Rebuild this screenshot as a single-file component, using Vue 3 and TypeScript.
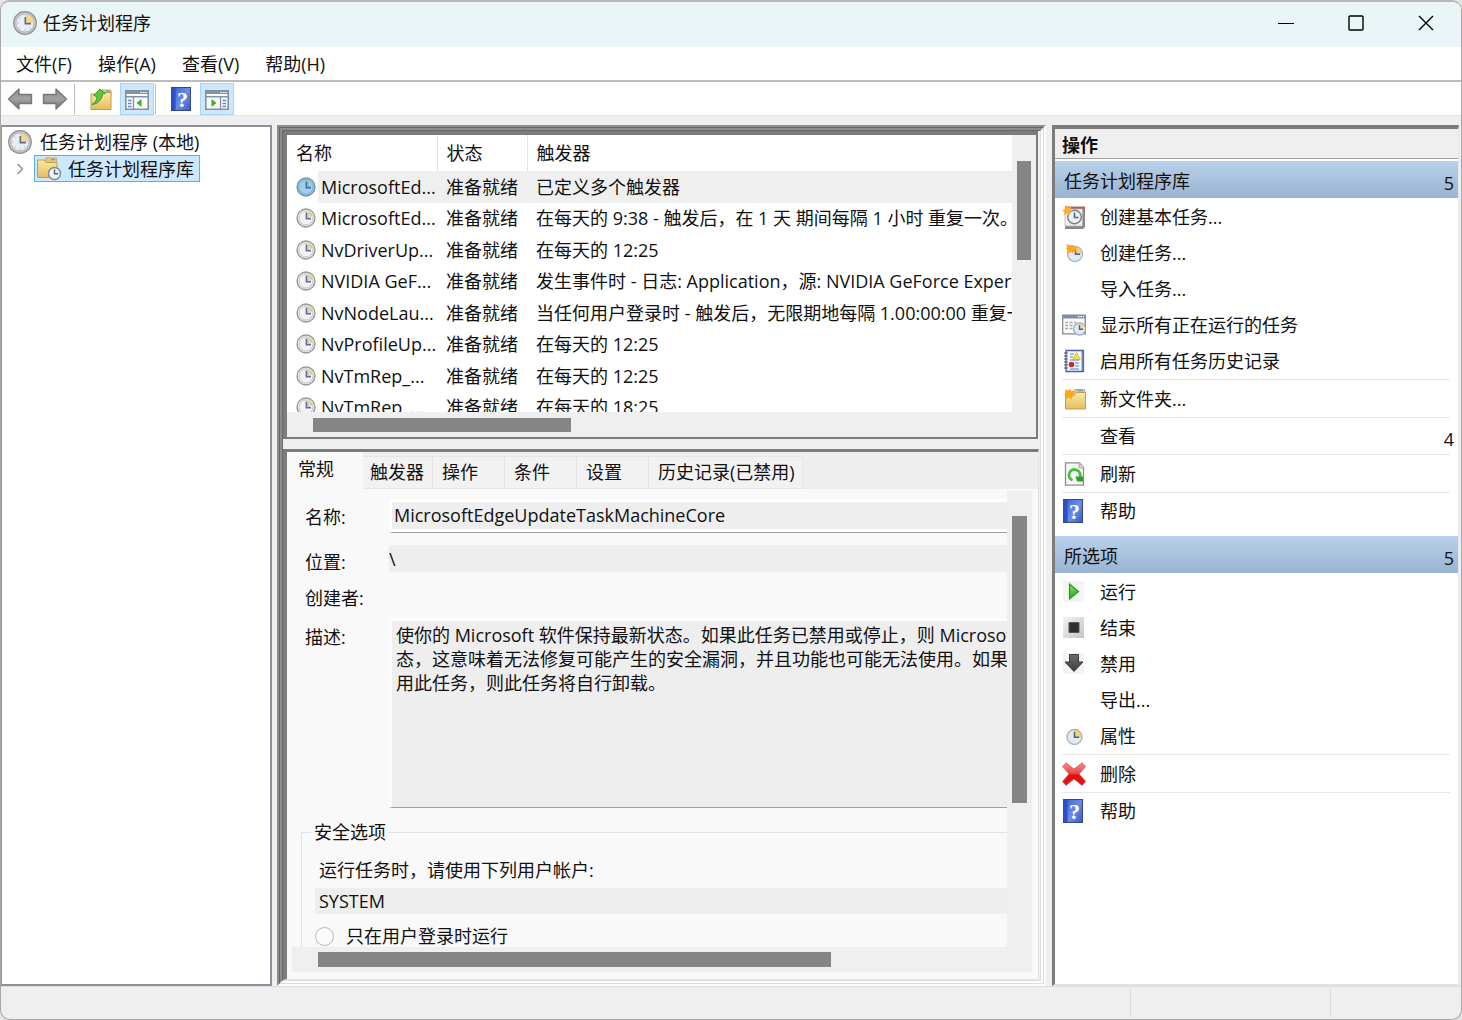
<script setup lang="ts">
import { ref } from 'vue'

interface Task { name: string; status: string; trigger: string }
interface Action { label: string; icon?: string; rule?: 'thin' | 'wide'; count?: string }
interface Group { title: string; count: string; items: Action[] }

const menus = ['文件(F)', '操作(A)', '查看(V)', '帮助(H)']

const tasks: Task[] = [
  { name: 'MicrosoftEd...', status: '准备就绪', trigger: '已定义多个触发器' },
  { name: 'MicrosoftEd...', status: '准备就绪', trigger: '在每天的 9:38 - 触发后，在 1 天 期间每隔 1 小时 重复一次。' },
  { name: 'NvDriverUp...', status: '准备就绪', trigger: '在每天的 12:25' },
  { name: 'NVIDIA GeF...', status: '准备就绪', trigger: '发生事件时 - 日志: Application，源: NVIDIA GeForce Experience' },
  { name: 'NvNodeLau...', status: '准备就绪', trigger: '当任何用户登录时 - 触发后，无限期地每隔 1.00:00:00 重复一次。' },
  { name: 'NvProfileUp...', status: '准备就绪', trigger: '在每天的 12:25' },
  { name: 'NvTmRep_...', status: '准备就绪', trigger: '在每天的 12:25' },
  { name: 'NvTmRep_...', status: '准备就绪', trigger: '在每天的 18:25' },
]
const selected = ref(0)

const tabs = ['常规', '触发器', '操作', '条件', '设置', '历史记录(已禁用)']
const activeTab = ref(0)

const taskName = ref('MicrosoftEdgeUpdateTaskMachineCore')
const location = ref('\\')
const description = ref(
  '使你的 Microsoft 软件保持最新状态。如果此任务已禁用或停止，则 Microsoft\n' +
  '态，这意味着无法修复可能产生的安全漏洞，并且功能也可能无法使用。如果\n' +
  '用此任务，则此任务将自行卸载。'
)
const account = ref('SYSTEM')

const groups: Group[] = [
  {
    title: '任务计划程序库',
    count: '5',
    items: [
      { label: '创建基本任务...', icon: 'i-basic' },
      { label: '创建任务...', icon: 'i-new' },
      { label: '导入任务...' },
      { label: '显示所有正在运行的任务', icon: 'i-running' },
      { label: '启用所有任务历史记录', icon: 'i-history' },
      { label: '新文件夹...', icon: 'i-newfolder', rule: 'wide' },
      { label: '查看', rule: 'thin', count: '4' },
      { label: '刷新', icon: 'i-refresh', rule: 'wide' },
      { label: '帮助', icon: 'i-help', rule: 'thin' },
    ],
  },
  {
    title: '所选项',
    count: '5',
    items: [
      { label: '运行', icon: 'i-run' },
      { label: '结束', icon: 'i-stop' },
      { label: '禁用', icon: 'i-disable' },
      { label: '导出...' },
      { label: '属性', icon: 'i-props' },
      { label: '删除', icon: 'i-delete', rule: 'wide' },
      { label: '帮助', icon: 'i-help', rule: 'thin' },
    ],
  },
]
</script>

<template>
  <div class="window">
    <svg class="defs" aria-hidden="true">
      <defs>
        <linearGradient id="g-folder" x1="0" y1="0" x2="0" y2="1">
          <stop offset="0" stop-color="#fbe9a6" /><stop offset="1" stop-color="#e6bd5c" />
        </linearGradient>
        <linearGradient id="g-arrow" x1="0" y1="0" x2="0" y2="1">
          <stop offset="0" stop-color="#8a8a8a" /><stop offset="0.5" stop-color="#a2a2a2" /><stop offset="1" stop-color="#6f6f6f" />
        </linearGradient>
        <linearGradient id="g-help" x1="0" y1="0" x2="1" y2="1">
          <stop offset="0" stop-color="#4568d8" /><stop offset="0.5" stop-color="#6b8de6" /><stop offset="1" stop-color="#3a5cc0" />
        </linearGradient>
        <linearGradient id="g-stop" x1="0" y1="0" x2="1" y2="1">
          <stop offset="0" stop-color="#f4f4f4" /><stop offset="1" stop-color="#c4c4c4" />
        </linearGradient>
        <linearGradient id="g-red" x1="0" y1="0" x2="0" y2="1">
          <stop offset="0" stop-color="#f28c8c" /><stop offset="0.45" stop-color="#ea4a4a" /><stop offset="0.55" stop-color="#ee0c0c" /><stop offset="1" stop-color="#d41a1a" />
        </linearGradient>
        <linearGradient id="g-green" x1="0" y1="0" x2="0" y2="1">
          <stop offset="0" stop-color="#7be05a" /><stop offset="1" stop-color="#2faa22" />
        </linearGradient>
        <linearGradient id="g-dark" x1="0" y1="0" x2="0" y2="1">
          <stop offset="0" stop-color="#6c6c6c" /><stop offset="1" stop-color="#3c3c3c" />
        </linearGradient>
      </defs>
      <symbol id="i-clock" viewBox="0 0 24 24">
        <circle cx="12" cy="12" r="11.3" fill="#c6c6c6" stroke="#8f8f8f" stroke-width="1.2" />
        <circle cx="12" cy="12" r="9" fill="#e6eff8" stroke="#a9adb1" stroke-width=".7" />
        <path d="M12 12V3.400A8.600 8.600 0 0 1 20.600 12Z" fill="#f6d488" />
        <path d="M12.300 6v6.600H18" fill="none" stroke="#5b6f8c" stroke-width="1.600" />
        <path d="M4.500 12h1.300M12 19.500v-1.300M6.600 6.600l.8.8M6.600 17.400l.8-.8M17.400 17.400l-.8-.8" stroke="#9db0c4" />
      </symbol>
      <symbol id="i-task" viewBox="0 0 20 20">
        <circle cx="10" cy="10" r="9" fill="#e6e6e6" stroke="#969896" stroke-width="1.300" />
        <circle cx="10" cy="10" r="7" fill="#f1f4f6" stroke="#b9bcbc" stroke-width=".8" />
        <path d="M11 9V3.500A6 6 0 0 1 16.400 9Z" fill="#e9e98c" />
        <path d="M13.600 4.600l2.400 3.400" stroke="#f0a080" />
        <path d="M10.400 4.600v6H15" fill="none" stroke="#6e63b4" stroke-width="1.600" />
        <path d="M12 5v4" stroke="#8fe08a" stroke-width="1.200" />
      </symbol>
      <symbol id="i-task-on" viewBox="0 0 20 20">
        <circle cx="10" cy="10" r="9" fill="#93bfdf" stroke="#6f97b4" stroke-width="1.300" />
        <circle cx="10" cy="10" r="7" fill="#a4cdea" stroke="#7fa9c9" stroke-width=".8" />
        <path d="M11 9V3.500A6 6 0 0 1 16.400 9Z" fill="#9fcfb4" />
        <path d="M10.400 4.600v6H15" fill="none" stroke="#3b6aa8" stroke-width="1.600" />
        <path d="M12 5v4" stroke="#69c79a" stroke-width="1.200" />
      </symbol>
      <symbol id="i-props" viewBox="0 0 24 24">
        <circle cx="12.500" cy="13" r="7.500" fill="#dfeaf2" stroke="#a9b7c2" stroke-width="1.400" />
        <path d="M12.500 13V6A7 7 0 0 1 19.500 13Z" fill="#f4cf7c" stroke="#e0b868" stroke-width=".8" />
        <path d="M12.500 8v5.300h4.600" fill="none" stroke="#4d6480" stroke-width="1.500" />
      </symbol>
      <symbol id="i-new" viewBox="0 0 24 24">
        <circle cx="13" cy="13" r="7.500" fill="#dfeaf2" stroke="#a9b7c2" stroke-width="1.400" />
        <path d="M13 13V6a7 7 0 0 1 7 7Z" fill="#f4cf7c" />
        <path d="M13.500 8v5.300h4.600" fill="none" stroke="#4d6480" stroke-width="1.500" />
        <path d="M4 3l4 1.200 3.200-.2 1.300 1.800 2.500.6-1.500 2.600.5 2-2.500 0-.5 1.500L8.800 11 5 13.500l1-4L4 7.500l1.200-1.500Z" fill="#fba61c" />
      </symbol>
      <symbol id="i-basic" viewBox="0 0 24 24">
        <path d="M3 2h20v20l-2 2H3Z" fill="#8d8585" />
        <path d="M3 1.500h20v3H3Z" fill="#a9665c" />
        <path d="M3 4h17.500v17H3Z" fill="#f2f0ee" stroke="#b4b0ae" stroke-width=".8" />
        <circle cx="12.500" cy="12" r="6.800" fill="#eaf1f2" stroke="#7b848a" stroke-width="1.500" />
        <path d="M12.500 7.500v5h4" fill="none" stroke="#4d6480" stroke-width="1.500" />
        <path d="M4.500 0l1.500 2.500L9 1.500 8.500 4.500 11 6 8 7 7.500 10.500 5 8.500 1.500 10 2.500 7 0 5.500 3 4.500Z" fill="#fdb02e" />
      </symbol>
      <symbol id="i-running" viewBox="0 0 24 24">
        <path d="M.7 2.200h22.600v18.600H.7Z" fill="#fafafa" stroke="#858b94" stroke-width="1.300" />
        <path d="M1 2h22v3.500H1Z" fill="#7e8ea6" />
        <path d="M16 3.700h1.500M18.500 3.700H20M21 3.700h1" stroke="#fff" stroke-width="1.200" />
        <path d="M3 9.500h3M7.500 9.500h3M3 12.500h3M7.500 12.500h3M3 15.500h3M7.500 15.500h3M12 9.500h2" stroke="#a9a9a9" stroke-width="1.400" />
        <circle cx="17.500" cy="16" r="6" fill="#dcebf2" stroke="#9fb0ba" stroke-width="1.300" />
        <path d="M17.500 16v-5.400a5.400 5.400 0 0 1 5.400 5.400Z" fill="#f4d9a0" />
        <path d="M17.500 12v4.300h3.500" fill="none" stroke="#4d6480" stroke-width="1.400" />
      </symbol>
      <symbol id="i-history" viewBox="0 0 24 24">
        <path d="M4 1.500h17.500v21H4Z" fill="#fbfcff" stroke="#4a5f9c" stroke-width="1.300" />
        <path d="M19.500 2h2v20h-2Z" fill="#7183bf" />
        <path d="M2 4h4M2 7h4M2 10h4M2 13h4M2 16h4M2 19h4" stroke="#555" stroke-width="1.100" />
        <path d="M8 5h4M8 8h3M8 11h9M13 14h4M13 17h4M8 20h9" stroke="#84a7d8" stroke-width="1.300" />
        <path d="M14.500 3.500l3.800 7h-7.600Z" fill="#f6dc3c" stroke="#c7a81c" stroke-width=".6" />
        <circle cx="9.500" cy="15.500" r="2.800" fill="#cf2626" />
      </symbol>
      <symbol id="i-newfolder" viewBox="0 0 24 24">
        <path d="M12 4.500l1-2h9.500v6H12Z" fill="#e9c878" stroke="#c29d4b" stroke-width=".8" />
        <path d="M15.500 3.500h5" stroke="#5fa8e8" stroke-width="1.600" />
        <path d="M3.500 7.500h9l2-2h9v16.500h-20Z" fill="url(#g-folder)" stroke="#c29d4b" stroke-width="1" />
        <path d="M3 2l2.500 1.500L8 2l1 2 4-.5-1.500 3 1.500 2.500-3 .5-.5 3L7 10.500 3.500 12l.5-3-1.500-2 1-1.500Z" fill="#fba61c" />
      </symbol>
      <symbol id="i-refresh" viewBox="0 0 24 24">
        <path d="M3.500.8h14l4 5v17.400h-18Z" fill="#f8f8f8" stroke="#8e8e8e" stroke-width="1.300" />
        <path d="M17 1v5h4.500" fill="#ddd" stroke="#aaa" />
        <path d="M10.500 18.300A5.600 5.600 0 1 1 18.200 13v2" fill="none" stroke="#46bd3c" stroke-width="2.800" />
        <path d="M13.500 14.500H21V19.500h-6Z" fill="#2f9e2c" />
      </symbol>
      <symbol id="i-help" viewBox="0 0 24 24">
        <path d="M1 0h20v24h-20Z" fill="#36468c" />
        <path d="M1.500 1h4v22h-4Z" fill="#2c50c8" />
        <path d="M5.500 1H20v22H5.500Z" fill="url(#g-help)" />
        <text x="12.500" y="20" text-anchor="middle" class="help-mark">?</text>
      </symbol>
      <symbol id="i-run" viewBox="0 0 24 24">
        <path d="M1 1h21v21H1Z" fill="#f4f4f4" />
        <path d="M7.500 4l9 7.500-9 7.500Z" fill="url(#g-green)" stroke="#239c1a" stroke-width="1.200" />
      </symbol>
      <symbol id="i-stop" viewBox="0 0 24 24">
        <path d="M1 1h21v21H1Z" fill="url(#g-stop)" />
        <path d="M7 6.500h10v10H7Z" fill="#2f2f2f" stroke="#555" />
      </symbol>
      <symbol id="i-disable" viewBox="0 0 24 24">
        <path d="M1 1h21v21H1Z" fill="#f4f4f4" />
        <path d="M7.500 2.500h9V10H21L12 19.500 3 10H7.500Z" fill="url(#g-dark)" stroke="#3a3a3a" stroke-width="1" />
      </symbol>
      <symbol id="i-delete" viewBox="0 0 24 24">
        <path d="M4 .8L12 7 20 .8 23.800 4.500 17 12 23.800 19.500 20 23.500 12 17 4 23.500.5 19.500 7 12 .5 4.500Z" fill="url(#g-red)" stroke="#c75a5a" stroke-width=".7" stroke-linejoin="round" />
      </symbol>
      <symbol id="i-back" viewBox="0 0 26 24">
        <path d="M1.500 12L12 2v5.500h12.500v9H12V22Z" fill="url(#g-arrow)" stroke="#777" stroke-width="1.400" stroke-linejoin="round" />
      </symbol>
      <symbol id="i-up" viewBox="0 0 24 24">
        <path d="M12 5l1-2h9v6H12Z" fill="#e9c878" stroke="#c29d4b" stroke-width=".8" />
        <path d="M17 4h3.500" stroke="#5fa8e8" stroke-width="1.500" />
        <path d="M2 7h10l2-1.500h8V22.500H2Z" fill="url(#g-folder)" stroke="#c29d4b" />
        <path d="M3 17.500C6.500 15.500 8 13 8 9.500L4.500 8.500 11 2l5.500 4.500L13.500 7C13 13 8.500 17 3 17.500Z" fill="#57c93a" stroke="#349a22" stroke-width=".9" />
      </symbol>
      <symbol id="i-pane-left" viewBox="0 0 24 22">
        <path d="M.8 1.800h22.400v18.400H.8Z" fill="#fafafa" stroke="#8a8f97" stroke-width="1.600" />
        <path d="M1 2h22v3H1ZM1 7h22v1.600H1Z" fill="#8494a8" />
        <path d="M15.500 3.500h1.500M18 3.500h1.500M20.500 3.500H22" stroke="#fff" />
        <path d="M8.500 8v12" stroke="#8a8f97" stroke-width="1.300" />
        <path d="M3 11.500h3.500M3 14.500h3.500M3 17.500h3.500" stroke="#5b8ed0" stroke-width="1.400" />
        <path d="M16.500 10v8L11.500 14Z" fill="#3dae2b" />
      </symbol>
      <symbol id="i-pane-right" viewBox="0 0 24 22">
        <path d="M.8 1.800h22.400v18.400H.8Z" fill="#fafafa" stroke="#8a8f97" stroke-width="1.600" />
        <path d="M1 2h22v3H1ZM1 7h22v1.600H1Z" fill="#8494a8" />
        <path d="M15.500 3.500h1.500M18 3.500h1.500M20.500 3.500H22" stroke="#fff" />
        <path d="M15.500 8v12" stroke="#8a8f97" stroke-width="1.300" />
        <path d="M17.500 11.500H21M17.500 14.500H21M17.500 17.500H21" stroke="#5b8ed0" stroke-width="1.400" />
        <path d="M6.500 10v8l5-4Z" fill="#3dae2b" />
      </symbol>
      <symbol id="i-library" viewBox="0 0 26 24">
        <path d="M9 3l1-2h10.500v6H9Z" fill="#e9c878" stroke="#c29d4b" stroke-width=".8" />
        <path d="M15 2.500h4" stroke="#5fa8e8" stroke-width="1.600" />
        <path d="M1.500 3H8l2 2.500h11V20.500H1.500Z" fill="url(#g-folder)" stroke="#c29d4b" />
        <circle cx="18.500" cy="16.500" r="6" fill="#edf3f7" stroke="#7f8a94" stroke-width="1.500" />
        <path d="M18.500 12.500v4.300h3.600" fill="none" stroke="#4d6480" stroke-width="1.400" />
      </symbol>
    </svg>

    <header class="titlebar">
      <svg class="ico24"><use href="#i-clock" /></svg>
      <h1>任务计划程序</h1>
      <div class="controls">
        <button type="button" aria-label="最小化"><svg viewBox="0 0 16 16"><path d="M0 8.500h16" /></svg></button>
        <button type="button" aria-label="最大化"><svg viewBox="0 0 16 16"><rect x="1" y="1" width="14" height="14" rx="1" class="bold" /></svg></button>
        <button type="button" aria-label="关闭"><svg viewBox="0 0 16 16"><path d="M1 1l14 14M15 1L1 15" class="bold" /></svg></button>
      </div>
    </header>

    <nav class="menubar">
      <button v-for="m in menus" :key="m" type="button">{{ m }}</button>
    </nav>

    <div class="toolbar">
      <button type="button" class="arrow" aria-label="后退"><svg><use href="#i-back" /></svg></button>
      <button type="button" class="arrow forward" aria-label="前进"><svg><use href="#i-back" /></svg></button>
      <span class="bar"></span>
      <button type="button" class="tool up" aria-label="上一级"><svg class="ico24"><use href="#i-up" /></svg></button>
      <button type="button" class="tool on" aria-label="控制台树"><svg class="pane-ico"><use href="#i-pane-left" /></svg></button>
      <span class="bar"></span>
      <button type="button" class="tool" aria-label="帮助"><svg class="ico24"><use href="#i-help" /></svg></button>
      <button type="button" class="tool on" aria-label="操作窗格"><svg class="pane-ico"><use href="#i-pane-right" /></svg></button>
    </div>

    <main class="body">
      <aside class="tree">
        <div class="root"><svg class="ico24"><use href="#i-clock" /></svg><span>任务计划程序 (本地)</span></div>
        <div class="branch">
          <svg class="chevron" viewBox="0 0 8 12"><path d="M1.500 1l5 5-5 5" /></svg>
          <button type="button" class="node"><svg><use href="#i-library" /></svg><span>任务计划程序库</span></button>
        </div>
      </aside>

      <div class="edge a"><div class="edge b"><div class="edge a"><div class="edge b">
        <div class="center">
          <section class="listbox">
            <div class="listview">
              <table>
                <thead>
                  <tr><th class="c-name">名称</th><th class="c-status">状态</th><th class="c-trigger">触发器</th></tr>
                </thead>
                <tbody>
                  <tr v-for="(t, i) in tasks" :key="i" :class="{ sel: i === selected }" @click="selected = i">
                    <td class="c-name"><span class="cell"><svg><use :href="i === selected ? '#i-task-on' : '#i-task'" /></svg><span>{{ t.name }}</span></span></td>
                    <td>{{ t.status }}</td>
                    <td>{{ t.trigger }}</td>
                  </tr>
                </tbody>
              </table>
            </div>
            <div class="vscroll"><div class="thumb"></div></div>
            <div class="hscroll"><div class="thumb"></div></div>
          </section>

          <section class="details">
            <div class="tabs" role="tablist">
              <button v-for="(t, i) in tabs" :key="t" type="button" role="tab" :aria-selected="i === activeTab" :class="{ active: i === activeTab }" @click="activeTab = i">{{ t }}</button>
            </div>
            <div class="page">
              <div class="viewport">
                <form class="form" @submit.prevent>
                  <div class="field name"><label for="f-name">名称:</label><input id="f-name" v-model="taskName" type="text" readonly /></div>
                  <div class="field place"><label for="f-place">位置:</label><input id="f-place" v-model="location" type="text" readonly /></div>
                  <div class="field author"><span>创建者:</span></div>
                  <div class="field desc"><label for="f-desc">描述:</label><textarea id="f-desc" v-model="description" wrap="off" readonly></textarea></div>
                  <fieldset>
                    <legend>安全选项</legend>
                    <label class="hint" for="f-account">运行任务时，请使用下列用户帐户:</label>
                    <input id="f-account" v-model="account" type="text" readonly />
                    <label class="choice"><input type="radio" name="logon" disabled /><span>只在用户登录时运行</span></label>
                  </fieldset>
                </form>
              </div>
              <div class="vscroll"><div class="thumb"></div></div>
              <div class="hscroll"><div class="thumb"></div></div>
            </div>
          </section>
        </div>
      </div></div></div></div>

      <aside class="actions">
        <h2>操作</h2>
        <section v-for="g in groups" :key="g.title">
          <h3><span>{{ g.title }}</span><span class="count">{{ g.count }}</span></h3>
          <ul>
            <li v-for="a in g.items" :key="a.label" :class="a.rule">
              <button type="button">
                <span class="slot"><svg v-if="a.icon" class="ico24"><use :href="'#' + a.icon" /></svg></span>
                <span>{{ a.label }}</span>
                <span v-if="a.count" class="count">{{ a.count }}</span>
              </button>
            </li>
          </ul>
        </section>
      </aside>
    </main>

    <footer class="status"><span></span><span></span><span></span></footer>
  </div>
</template>

<style>
html, body { background: #e4e4e4; }
</style>

<style scoped>
.window, .window * { box-sizing: border-box; }
.window {
  display: flex;
  flex-direction: column;
  height: 100vh;
  min-height: 600px;
  overflow: hidden;
  border: 1px solid #a8a8a8;
  border-top: 2px solid #b6b6b6;
  border-radius: 10px;
  background: #efefef;
  color: #111;
  font: 18px/24px "Open Sans", "Noto Sans CJK SC", sans-serif;
}
.defs { position: absolute; width: 0; height: 0; }
.help-mark { font: bold 22px "Liberation Serif", serif; fill: #fff; }
button {
  margin: 0;
  padding: 0;
  border: 0;
  background: none;
  color: inherit;
  font: inherit;
  text-align: left;
}
input, textarea { margin: 0; border: 0; border-radius: 0; outline: 0; color: inherit; font: inherit; }
svg { display: block; flex: none; }
.ico24 { width: 24px; height: 24px; }

.titlebar { display: flex; flex: none; align-items: center; height: 45px; padding: 0 0 3px 12px; background: #eaf5f7; }
.titlebar h1 { margin: 0 0 0 6px; font-size: 18px; font-weight: 400; }
.controls { display: flex; margin-left: auto; }
.controls button { display: flex; align-items: center; justify-content: center; width: 70px; height: 42px; }
.controls svg { width: 16px; height: 16px; fill: none; stroke: #000; stroke-width: 1; }
.controls .bold { stroke-width: 1.4; }

.menubar { display: flex; flex: none; gap: 26px; height: 35px; padding: 0 15px; border-bottom: 2px solid #bcbcbe; background: #fff; }

.toolbar { display: flex; flex: none; align-items: center; height: 34px; padding: 1px 0 0 6px; border-bottom: 1px solid #e2e2e2; background: #fff; }
.arrow { width: 26px; height: 24px; margin-right: 9px; }
.arrow svg { width: 26px; height: 24px; }
.forward { margin-right: 6px; transform: scaleX(-1); }
.bar { width: 1px; height: 30px; background: #bdbdbd; }
.tool { display: flex; align-items: center; justify-content: center; width: 34px; height: 32px; }
.tool.up { margin: 0 1px 0 9px; }
.tool.on { padding-top: 2px; border: 1px solid #a6d6fb; background: #cce8ff; }
.tool.on + .bar { margin: 0 9px 0 1px; }
.tool + .tool.on { margin-left: 1px; }
.pane-ico { width: 24px; height: 22px; }

.body { display: flex; flex: 1; min-height: 0; padding: 9px 2px 0 0; }
.tree { flex: none; width: 271px; margin-right: 5px; border: 2px solid #8b929c; border-left-width: 1px; background: #fff; }
.root { display: flex; align-items: center; gap: 8px; padding: 3px 0 0 6px; }
.branch { display: flex; align-items: center; height: 29px; padding-left: 14px; }
.chevron { width: 8px; height: 12px; margin-right: 10px; fill: none; stroke: #8a8a8a; stroke-width: 1.3; }
.node { display: flex; align-items: center; height: 27px; padding: 0 5px 0 1px; border: 1px solid #5aaeea; background: #cce8ff; }
.node svg { width: 26px; height: 24px; margin-right: 6px; }

.edge { display: flex; flex: 1; min-width: 0; border-style: solid; }
.edge.a { border-width: 2px; border-color: #8d8d8d #fdfdfd #fdfdfd #8d8d8d; }
.edge.b { border-width: 1px; border-color: #686868 #dedede #dedede #686868; }
.center { display: flex; flex: 1; flex-direction: column; min-width: 0; padding-right: 1px; }

.listbox {
  display: grid;
  grid-template: 1fr 25px / 1fr 24px;
  flex: none;
  height: 308px;
  margin-right: 1px;
  border-style: solid;
  border-width: 4px 2px 2px 4px;
  border-color: #7c7c7c;
  background: #efefef;
}
.listview { min-width: 0; min-height: 0; overflow: hidden; background: #fff; }
table { width: 100%; height: 288px; border-collapse: collapse; table-layout: fixed; }
th, td { padding: 0 0 0 9px; overflow: hidden; font-weight: 400; text-align: left; white-space: nowrap; }
th { height: 36px; border-right: 1px solid #e4e4e4; }
th:last-child { border-right: 0; }
th.c-name { width: 150px; }
th.c-status { width: 90px; }
.cell { display: flex; align-items: center; gap: 5px; }
.cell svg { width: 20px; height: 20px; }
.sel td { background: #efefef; }
.sel td.c-name { background: linear-gradient(90deg, #fff 31px, #efefef 31px); }

.vscroll, .hscroll { display: flex; background: #efefef; }
.thumb { background: #858585; }
.listbox .vscroll { padding: 26px 5px 0; }
.listbox .vscroll .thumb { width: 14px; height: 99px; }
.listbox .hscroll { padding: 6px 0 0 26px; }
.listbox .hscroll .thumb { width: 258px; height: 14px; }

.details {
  display: flex;
  flex: 1;
  flex-direction: column;
  min-height: 0;
  margin-top: 10px;
  border-style: solid;
  border-width: 3px 1px 1px 4px;
  border-color: #7c7c7c #e3e3e3 #e3e3e3 #7c7c7c;
  background: #eee;
}
.tabs { display: flex; flex: none; align-items: flex-end; height: 37px; }
.tabs button { min-width: 72px; height: 33px; padding: 0 7px 2px; border: 1px solid #e6e6e6; border-left: 0; background: #f2f2f2; white-space: nowrap; }
.tabs button:nth-child(2) { min-width: 70px; width: 70px; }
.tabs button:nth-child(n + 3) { padding-left: 9px; }
.tabs button.active { width: 76px; height: 37px; padding: 0 11px 4px; border: 0; background: #f9f9f9; }
.page {
  display: grid;
  grid-template: 1fr 25px / 1fr 25px;
  flex: 1;
  min-height: 0;
  padding: 0 6px 7px 0;
  background: #f9f9f9;
}
.page .vscroll { margin-top: 2px; padding: 25px 5px 0; }
.page .vscroll .thumb { width: 15px; height: 287px; }
.page .hscroll { grid-column: 1 / 3; margin-left: 5px; padding: 5px 0 0 26px; }
.page .hscroll .thumb { width: 513px; height: 15px; }
.viewport { min-width: 0; min-height: 0; overflow: hidden; }
.form { width: calc(100% + 60px); padding: 10px 0 0 14px; }
.field { display: grid; grid-template-columns: 84px 1fr; padding-left: 4px; }
.field input { width: 100%; background: #eee; }
.name label { padding-top: 6px; }
.name input { height: 34px; padding: 0 2px 4px; border: 3px solid #fff; border-bottom: 1px solid #a0a0a0; box-shadow: inset 0 -3px #fff; }
.place { margin-top: 12px; }
.place label { padding-top: 5px; }
.place input { height: 27px; padding: 0; }
.author { height: 42px; padding-top: 13px; margin-top: -1px; }
.desc { margin-top: 3px; }
.desc label { padding-top: 7px; }
.desc textarea {
  display: block;
  width: 100%;
  height: 190px;
  padding: 2px 4px;
  overflow: hidden;
  border: 3px solid #fcfcfc;
  border-bottom: 1px solid #a0a0a0;
  background: #eee;
  line-height: 24px;
  resize: none;
  white-space: pre;
}
fieldset { display: flex; flex-direction: column; min-width: 0; margin: 12px 0 0; padding: 14px 0 40px 13px; border: 1px solid #e2e2e2; }
legend { margin-left: -4px; padding: 0 3px; }
fieldset > input { height: 26px; margin: 6px 0 10px; padding: 0 4px; background: #eee; }
.hint { padding-left: 4px; }
.choice { display: flex; align-items: center; gap: 12px; }
.choice input { appearance: none; flex: none; width: 19px; height: 19px; border: 1px solid #b8b8b8; border-radius: 50%; background: #fafafa; }

.actions {
  flex: none;
  width: 407px;
  margin-left: 6px;
  overflow: hidden;
  border-style: solid;
  border-width: 4px 1px 2px 3px;
  border-color: #7c7c7c #e6e6e6 #e3e3e3 #7c7c7c;
  background: #fff;
}
.actions h2 { height: 30px; margin: 0 0 2px; padding: 4px 0 0 7px; border-bottom: 1px solid #a0a0a0; background: #efefef; font-size: 18px; line-height: 24px; }
.actions h3 {
  display: flex;
  align-items: center;
  justify-content: space-between;
  height: 37px;
  margin: 0 0 1px;
  padding: 2px 4px 0 9px;
  background: linear-gradient(#b9d1ea, #99b4d1);
  font-size: 18px;
  font-weight: 400;
}
.actions h3 .count { padding-top: 5px; }
.actions section + section { margin-top: 7px; }
ul { margin: 0; padding: 0; list-style: none; }
li { padding-left: 7px; }
li button { display: flex; align-items: center; width: 100%; height: 36px; padding-right: 4px; }
li .slot { flex: none; width: 38px; }
li .count { margin-left: auto; padding-top: 5px; }
li.thin::before, li.wide::before { content: ""; display: block; height: 1px; margin-right: 8px; background: #e8e8e8; }
li.wide::before { margin-bottom: 1px; }

.status { display: flex; flex: none; height: 33px; border-top: 1px solid #dcdcdc; }
.status span { width: 131px; margin: 2px 0; border-left: 1px solid #dcdcdc; }
.status span:first-child { flex: 1; border: 0; }
.status span:nth-child(2) { width: 200px; }
</style>
